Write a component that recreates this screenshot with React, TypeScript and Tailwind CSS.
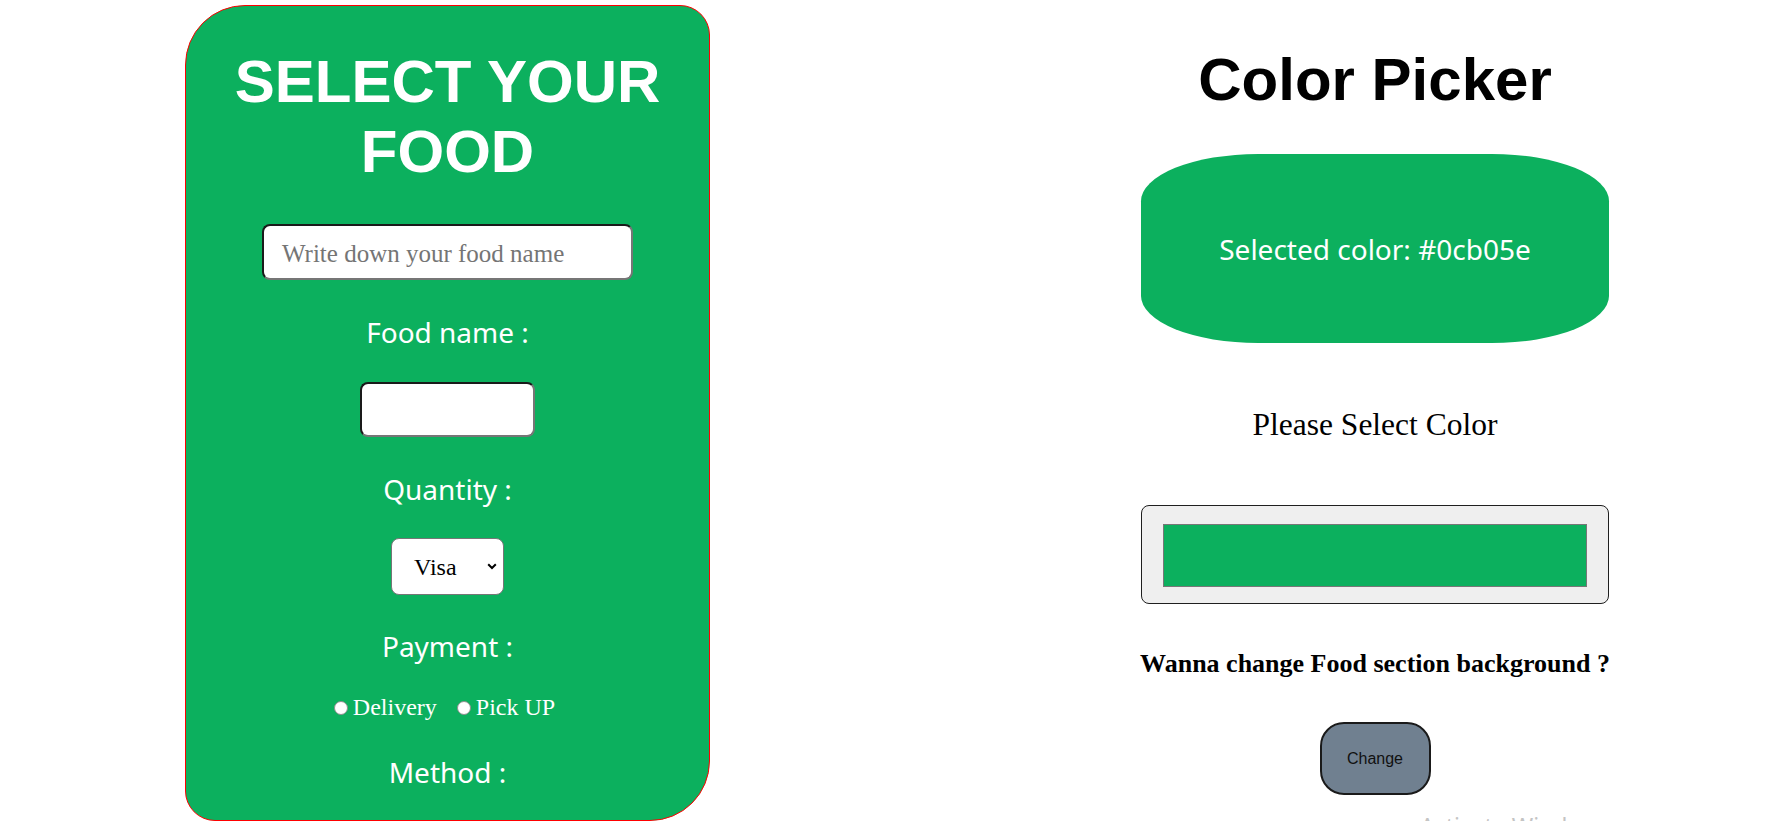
import React from "react";

const sans = { fontFamily: '"Liberation Sans", Arial, sans-serif' };
const label = { fontFamily: '"Noto Sans", "Open Sans", sans-serif' };
const serif = { fontFamily: '"Liberation Serif", "Times New Roman", serif' };

function Label({ text, mt }: { text: string; mt: string }) {
  return (
    <div className={`${mt} text-white text-[28px] leading-[38px] whitespace-nowrap`} style={label}>
      {text}
    </div>
  );
}

function Radio() {
  return <span className="inline-block w-[14px] h-[14px] rounded-full bg-white border border-[#8f8f8f] shrink-0" />;
}

export default function App() {
  return (
    <div className="relative w-full h-[821px] overflow-hidden bg-white flex items-start pl-[185px]">
      {/* Food card */}
      <div className="mt-[5px] w-[525px] h-[816px] shrink-0 bg-[#0cb05e] border border-[#ff0000] rounded-[60px_30px] flex flex-col items-center pt-[41px]">
        <h1 className="m-0 text-white text-[60px] leading-[70px] font-bold text-center" style={sans}>
          SELECT YOUR
          <br />
          FOOD
        </h1>
        <div className="mt-[37px] w-[371px] h-[56px] bg-white rounded-[8px] border-2 border-t-[#1a1a1a] border-l-[#1a1a1a] border-r-[#767676] border-b-[#767676] flex items-center pl-[18px] pt-[3px]">
          <span className="text-[25px] leading-[28px] text-[#757575] whitespace-nowrap" style={serif}>
            Write down your food name
          </span>
        </div>
        <Label text="Food name :" mt="mt-[33px]" />
        <div className="mt-[31px] w-[175px] h-[55px] bg-white rounded-[8px] border-2 border-t-[#1a1a1a] border-l-[#1a1a1a] border-r-[#767676] border-b-[#767676]" />
        <Label text="Quantity :" mt="mt-[33px]" />
        <div className="mt-[30px] w-[113px] h-[57px] bg-white rounded-[8px] border border-[#767676] flex items-center justify-between pl-[22px] pr-[6px] pt-[2px]">
          <span className="text-[24px] leading-[27px] text-black" style={serif}>
            Visa
          </span>
          <svg width="10" height="7" viewBox="0 0 10 7" className="mb-[2px]">
            <path d="M1.2 1.2 L5 5 L8.8 1.2" fill="none" stroke="#000" strokeWidth="2" />
          </svg>
        </div>
        <Label text="Payment :" mt="mt-[32px]" />
        <div className="mt-[29px] h-[27px] flex items-center pr-[6px] text-white text-[24px] leading-[27px]" style={serif}>
          <Radio />
          <span className="ml-[5px]">Delivery</span>
          <span className="ml-[20px] flex items-center">
            <Radio />
          </span>
          <span className="ml-[5px]">Pick UP</span>
        </div>
        <Label text="Method :" mt="mt-[32px]" />
      </div>

      {/* Color picker column */}
      <div className="ml-[431px] w-[468px] shrink-0 flex flex-col items-center">
        <h1 className="m-0 mt-[45px] text-black text-[60px] leading-[69px] font-bold whitespace-nowrap" style={sans}>
          Color Picker
        </h1>
        <div className="mt-[40px] w-full h-[189px] rounded-[25%] bg-[#0cb05e] flex items-center justify-center">
          <span className="text-white text-[28px] leading-[38px] whitespace-nowrap" style={label}>
            Selected color: #0cb05e
          </span>
        </div>
        <div className="mt-[64px] text-black text-[31.5px] leading-[35px] whitespace-nowrap" style={serif}>
          Please Select Color
        </div>
        <div className="mt-[63px] w-full h-[99px] bg-[#efefef] border border-[#1f1f1f] rounded-[8px] px-[21px] pt-[18px]">
          <div className="w-full h-[63px] bg-[#0cb05e] border border-[#777777]" />
        </div>
        <div className="mt-[45px] text-black text-[26px] leading-[29px] font-bold whitespace-nowrap" style={serif}>
          Wanna change Food section background ?
        </div>
        <button
          className="mt-[44px] w-[111px] h-[73px] bg-[#708090] border-2 border-[#1a1a1a] rounded-[24px] flex items-center justify-center text-[16px] text-[#111111]"
          style={sans}
        >
          Change
        </button>
      </div>

      {/* Windows activation watermark */}
      <div
        className="absolute left-[1420px] top-[808.5px] text-[23px] text-[#c4c4c4] whitespace-nowrap pointer-events-none"
        style={label}
      >
        Activate Windows
      </div>
    </div>
  );
}
